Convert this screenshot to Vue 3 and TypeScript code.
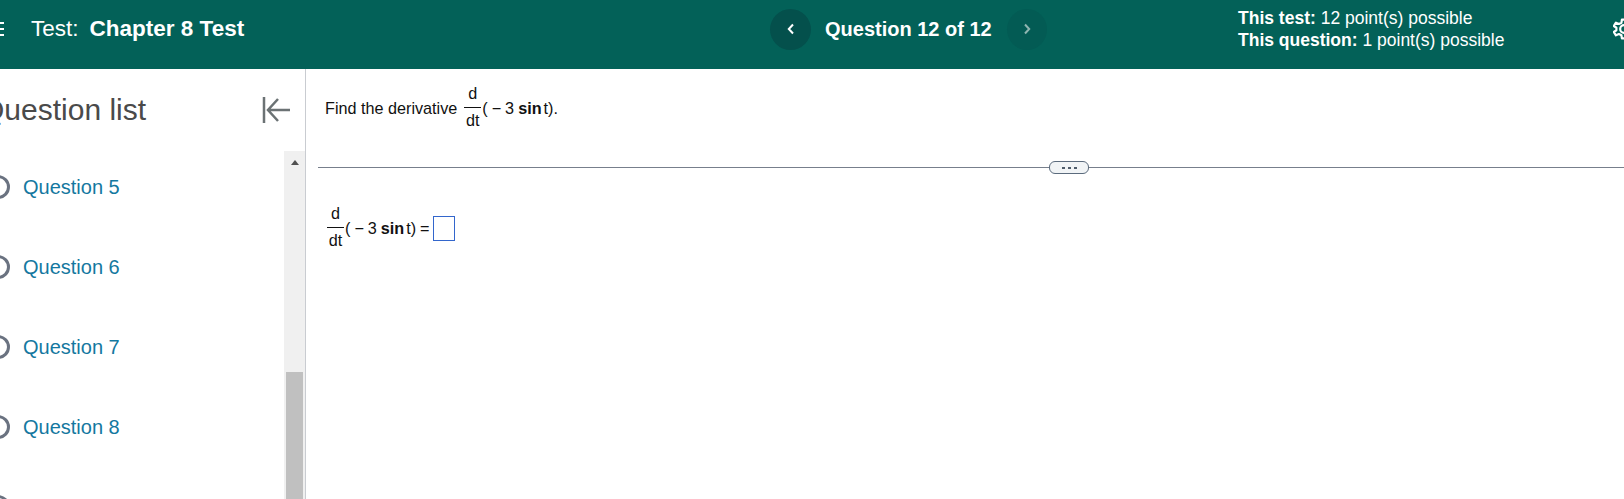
<script setup lang="ts">
const questions = [5, 6, 7, 8, 9]
</script>

<template>
  <div class="page">
    <header class="topbar">
      <div class="test-title">
        <span class="menu-icon"><i></i><i></i><i></i></span>
        <span class="test-label">Test:</span>
        <strong>Chapter 8 Test</strong>
      </div>
      <nav class="question-nav">
        <button class="nav-btn">
          <svg width="12" height="12" viewBox="0 0 12 12"><path d="M8 1.5 L3.8 6 L8 10.5" fill="none" stroke="#fff" stroke-width="2" /></svg>
        </button>
        <span class="nav-label">Question 12 of 12</span>
        <button class="nav-btn next">
          <svg width="12" height="12" viewBox="0 0 12 12"><path d="M4 1.5 L8.2 6 L4 10.5" fill="none" stroke="#8fb5b1" stroke-width="2" /></svg>
        </button>
      </nav>
      <div class="points">
        <div><strong>This test:</strong> 12 point(s) possible</div>
        <div><strong>This question:</strong> 1 point(s) possible</div>
      </div>
      <svg class="gear" width="22" height="22" viewBox="0 0 26 26">
        <path d="M10.5 2 H15.5 L16 5.5 L19 7 L22.5 5.5 L25 9.5 L22 11.5 V14.5 L25 16.5 L22.5 20.5 L19 19 L16 20.5 L15.5 24 H10.5 L10 20.5 L7 19 L3.5 20.5 L1 16.5 L4 14.5 V11.5 L1 9.5 L3.5 5.5 L7 7 L10 5.5 Z" fill="none" stroke="#fff" stroke-width="2.6" stroke-linejoin="round" />
        <circle cx="13" cy="13" r="4.5" fill="none" stroke="#fff" stroke-width="2.6" />
      </svg>
    </header>

    <div class="body-row">
      <aside class="sidebar">
        <div class="sidebar-head">
          <h2>Question list</h2>
          <svg width="30" height="28" viewBox="0 0 30 28">
            <path d="M2 1 V27 M28 14 H7 M16 3 L6 14 L16 25" fill="none" stroke="#6b7274" stroke-width="2.5" />
          </svg>
        </div>
        <div class="list-wrap">
          <ul class="list">
            <li v-for="q in questions" :key="q">
              <span class="radio"></span>
              <a>Question {{ q }}</a>
            </li>
          </ul>
          <div class="scrollbar">
            <span class="arrow"></span>
            <span class="thumb"></span>
          </div>
        </div>
      </aside>

      <main class="content">
        <div class="prompt">
          <span class="text">Find the derivative</span>
          <span class="frac"><span class="num">d</span><span class="den">dt</span></span>
          <span class="expr">( − 3 <b>sin</b><span class="thin"></span>t).</span>
        </div>
        <div class="divider"><span class="pill"><i></i><i></i><i></i></span></div>
        <div class="answer">
          <span class="frac"><span class="num">d</span><span class="den">dt</span></span>
          <span class="expr">( − 3 <b>sin</b><span class="thin"></span>t) =</span>
          <span class="box"></span>
        </div>
      </main>
    </div>
  </div>
</template>

<style>
html, body {
  overflow: hidden;
}
</style>

<style scoped>
.page {
  width: 1624px;
  height: 499px;
  overflow: hidden;
  font-family: "Liberation Sans", Arial, sans-serif;
  background: #fff;
  color: #111;
}

.topbar {
  height: 69px;
  box-sizing: border-box;
  padding-bottom: 11px;
  background: #036158;
  color: #fff;
  display: flex;
  align-items: center;
}

.test-title {
  flex: none;
  width: 770px;
  display: flex;
  align-items: center;
  font-size: 22.5px;
}

.menu-icon {
  width: 14px;
  margin-left: -10px;
  margin-right: 27px;
  display: flex;
  flex-direction: column;
  gap: 4px;
}

.menu-icon i {
  height: 2px;
  background: #fff;
}

.test-label {
  margin-right: 11px;
}

.question-nav {
  flex: none;
  width: 468px;
  display: flex;
  align-items: center;
}

.nav-btn {
  width: 41px;
  height: 41px;
  padding: 0;
  border: none;
  border-radius: 50%;
  background: #04504c;
  display: flex;
  align-items: center;
  justify-content: center;
}

.nav-btn.next {
  width: 40px;
  background: #035b54;
}

.nav-label {
  margin: 0 15px 0 14px;
  font-size: 20px;
  font-weight: bold;
  white-space: nowrap;
}

.points {
  flex: none;
  width: 375px;
  font-size: 17.5px;
  line-height: 22px;
}

.gear {
  flex: none;
}

.body-row {
  display: flex;
  height: 430px;
}

.sidebar {
  width: 305px;
  flex: none;
  border-right: 1px solid #c9ccd1;
  display: flex;
  flex-direction: column;
}

.sidebar-head {
  height: 82px;
  display: flex;
  align-items: center;
  justify-content: space-between;
  padding-right: 13px;
  margin-left: -19px;
}

.sidebar-head h2 {
  margin: 0;
  font-size: 30px;
  font-weight: normal;
  color: #4a4a4a;
}

.list-wrap {
  flex: 1;
  display: flex;
  min-height: 0;
}

.list {
  flex: 1;
  margin: 0;
  padding: 24px 0 0;
  list-style: none;
  display: flex;
  flex-direction: column;
  gap: 56px;
}

.list li {
  height: 24px;
  display: flex;
  align-items: center;
  gap: 13px;
  margin-left: -14px;
  font-size: 20px;
  color: #1478a0;
}

.radio {
  width: 24px;
  height: 24px;
  box-sizing: border-box;
  border: 3px solid #6a7280;
  border-radius: 50%;
}

.scrollbar {
  width: 21px;
  background: #f0f0f0;
  display: flex;
  flex-direction: column;
  align-items: center;
}

.arrow {
  margin-top: 9px;
  width: 0;
  height: 0;
  border-left: 4.5px solid transparent;
  border-right: 4.5px solid transparent;
  border-bottom: 5px solid #505050;
}

.thumb {
  width: 17px;
  height: 200px;
  margin-top: 207px;
  background: #c0c0c0;
}

.content {
  flex: 1;
  min-width: 0;
  font-size: 16.2px;
}

.prompt {
  padding: 11px 0 34px 19px;
  display: flex;
  align-items: center;
}

.text {
  margin: 3px 7px 0 0;
}

.frac {
  display: inline-flex;
  flex-direction: column;
  align-items: center;
  width: 17px;
}

.num {
  line-height: 27px;
}

.den {
  width: 100%;
  line-height: 25px;
  text-align: center;
  border-top: 1px solid #111;
}

.expr {
  margin: 3px 0 0 1px;
  white-space: pre;
  word-spacing: -0.5px;
}

.thin {
  display: inline-block;
  width: 2px;
}

.divider {
  position: relative;
  height: 1px;
  margin-left: 12px;
  background: #777f8c;
}

.pill {
  position: absolute;
  left: 731px;
  top: -6px;
  width: 40px;
  height: 13px;
  box-sizing: border-box;
  border: 1px solid #5b6b7d;
  border-radius: 6px;
  background: #f1f4f6;
  display: flex;
  align-items: center;
  justify-content: center;
  gap: 3px;
}

.pill i {
  width: 3px;
  height: 2px;
  background: #4f5c6b;
}

.answer {
  margin: 32px 0 0 21px;
  display: flex;
  align-items: center;
}

.box {
  width: 22px;
  height: 25px;
  box-sizing: border-box;
  margin: 3px 0 0 3px;
  border: 1px solid #3366cc;
}
</style>
